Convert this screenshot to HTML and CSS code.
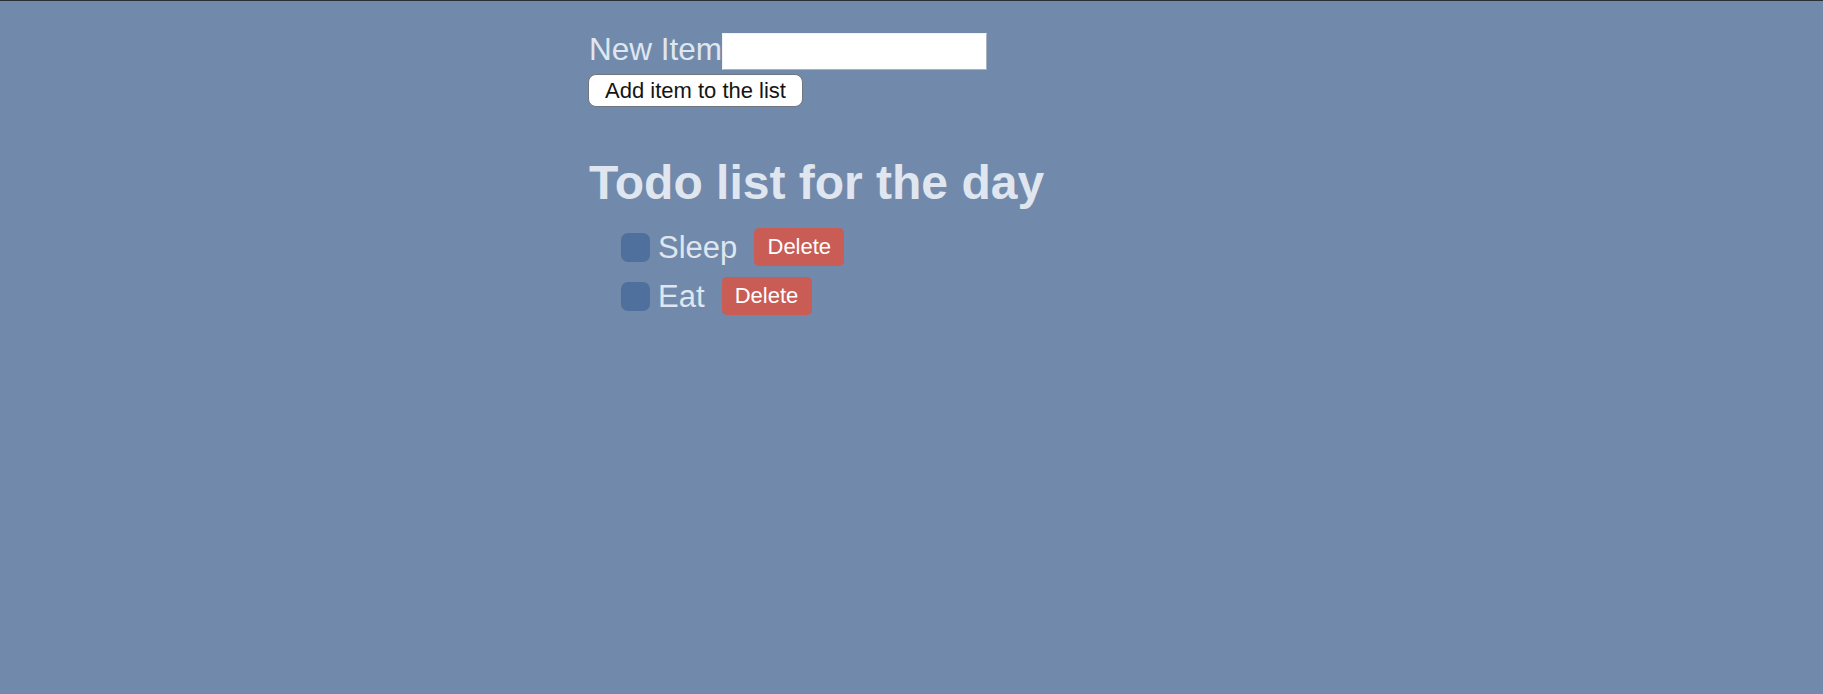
FILE: index.html
```html
<!DOCTYPE html>
<html lang="en">
<head>
<meta charset="utf-8">
<title>Todo list</title>
<link rel="stylesheet" href="styles.css">
</head>
<body>
<div class="container">
  <form class="new-item">
    <div class="field-row">
      <label class="field-label" for="item">New Item</label>
      <input class="field-input" id="item" type="text">
    </div>
    <button class="add-btn" type="button">Add item to the list</button>
  </form>
  <h2 class="title">Todo list for the day</h2>
  <ul class="todo-list">
    <li class="todo-item">
      <span class="check"></span>
      <span class="todo-text">Sleep</span>
      <button class="delete-btn" type="button">Delete</button>
    </li>
    <li class="todo-item">
      <span class="check"></span>
      <span class="todo-text">Eat</span>
      <button class="delete-btn" type="button">Delete</button>
    </li>
  </ul>
</div>
</body>
</html>
```

FILE: styles.css
```css
html, body {
  margin: 0;
  padding: 0;
}

body {
  background: #718aab;
  border-top: 1px solid #2a2f38;
  min-height: 693px;
  font-family: "Liberation Sans", Arial, Helvetica, sans-serif;
  color: #dfe6ef;
}

.container {
  width: 645px;
  margin: 0 auto;
  padding-top: 32px;
}

.new-item {
  margin: 0;
}

.field-row {
  display: flex;
  align-items: flex-start;
}

.field-label {
  font-size: 31.5px;
  line-height: 30px;
  padding-top: 1px;
}

.field-input {
  width: 265px;
  height: 37px;
  box-sizing: border-box;
  margin: 0;
  background: #fff;
  border: 1px solid;
  border-color: #f2f2f2 #a9b2bf #a9b2bf #f2f2f2;
  outline: none;
}

.add-btn {
  display: block;
  margin-top: 4px;
  margin-left: -1px;
  height: 33px;
  width: 215px;
  box-sizing: border-box;
  padding: 0 15px;
  background: #fff;
  color: #141414;
  border: 1px solid #6f7682;
  border-radius: 8px;
  font-family: "Liberation Sans", Arial, Helvetica, sans-serif;
  font-size: 22px;
  line-height: 30px;
}

.title {
  margin: 49px 0 0;
  font-size: 48px;
  line-height: 54px;
  font-weight: bold;
  color: #dfe6ef;
}

.todo-list {
  list-style: none;
  margin: 18px 0 0;
  padding: 0 0 0 32px;
  display: flex;
  flex-direction: column;
  gap: 11px;
}

.todo-item {
  display: flex;
  align-items: center;
  height: 38px;
}

.check {
  width: 29px;
  height: 29px;
  border-radius: 7px;
  background: #4f6f9d;
  flex: none;
}

.todo-text {
  margin-left: 8px;
  font-size: 31px;
  line-height: 34px;
  padding-top: 2px;
}

.delete-btn {
  margin-left: 17px;
  height: 38px;
  width: 90px;
  box-sizing: border-box;
  padding: 0;
  text-align: center;
  background: #c95c54;
  color: #fff;
  border: none;
  border-radius: 5px;
  font-family: "Liberation Sans", Arial, Helvetica, sans-serif;
  font-size: 22px;
  line-height: 38px;
}
```
